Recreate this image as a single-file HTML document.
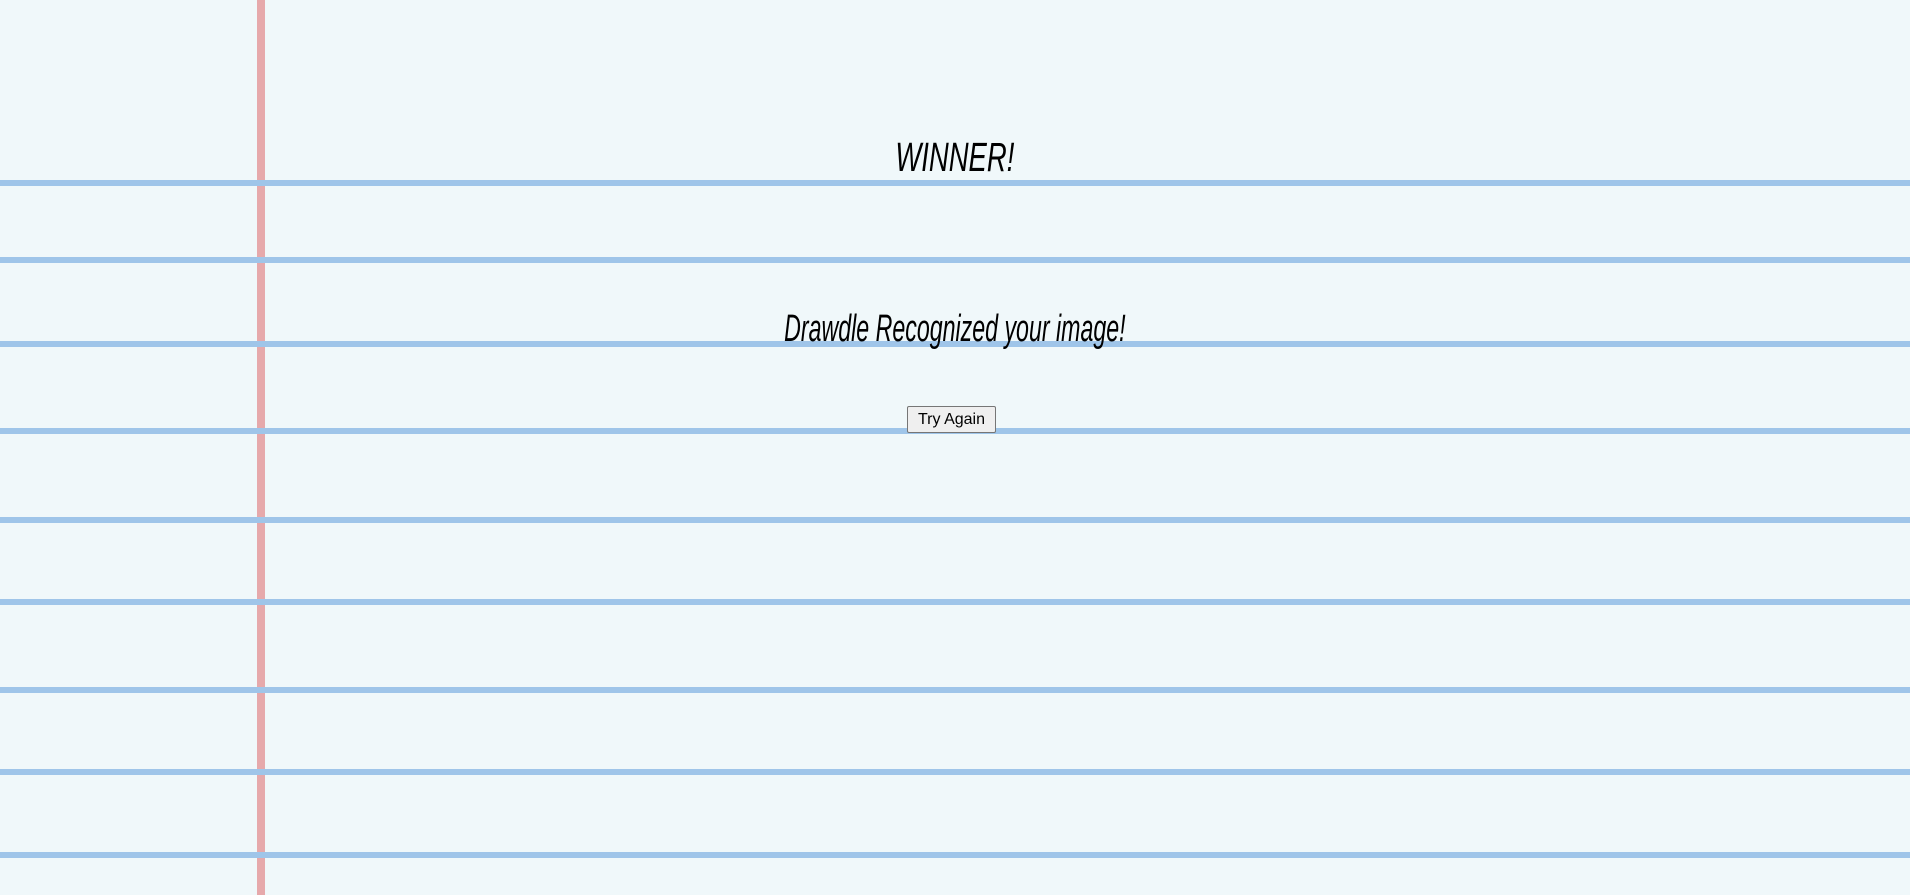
<!DOCTYPE html>
<html><head><meta charset="utf-8"><style>
html,body{margin:0;padding:0;width:1910px;height:895px;overflow:hidden;background:#f0f8fa;position:relative;font-family:"Liberation Sans",sans-serif}
.h{position:absolute;left:0;width:1910px;height:6px;background:#9fc5e9}
.v{position:absolute;left:257px;top:0;width:8px;height:895px;background:#e6a9ab}
.t{position:absolute;left:0;width:1910px;text-align:center;color:#000;font-family:"Liberation Sans Narrow","Liberation Sans",sans-serif;font-style:italic;white-space:nowrap}
button{position:absolute;left:907px;top:406px;width:89px;height:27px;font-family:"Liberation Sans",sans-serif;font-size:16px;background:#efefef;border:1px solid #767676;border-radius:2px;padding:0;color:#000}
</style></head><body>
<div class="v"></div>
<div class="h" style="top:180px"></div>
<div class="h" style="top:257px"></div>
<div class="h" style="top:341px"></div>
<div class="h" style="top:428px"></div>
<div class="h" style="top:517px"></div>
<div class="h" style="top:599px"></div>
<div class="h" style="top:687px"></div>
<div class="h" style="top:769px"></div>
<div class="h" style="top:852px"></div>
<div class="t" style="top:137px;font-size:41px;line-height:41px"><span style="display:inline-block;transform:scaleX(0.67)">WINNER!</span></div>
<div class="t" style="top:309px;font-size:38px;line-height:40px"><span style="display:inline-block;transform:scaleX(0.61)">Drawdle Recognized your image!</span></div>
<button>Try Again</button>
</body></html>
